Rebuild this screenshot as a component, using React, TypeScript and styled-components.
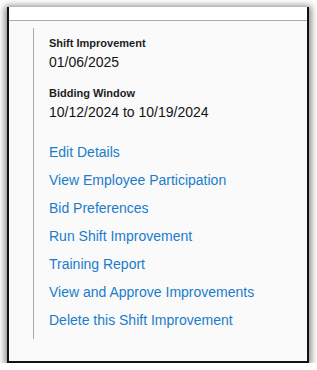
import React from 'react'
import styled, { createGlobalStyle } from 'styled-components'

const GlobalStyle = createGlobalStyle`
  html, body {
    margin: 0;
    padding: 0;
    background: #ffffff;
    font-family: "Liberation Sans", Arial, sans-serif;
  }
`

const Window = styled.div`
  box-sizing: border-box;
  margin: 7px 0 0 7px;
  width: 302px;
  height: 356px;
  border: 2px solid #111;
  border-top: none;
  background: #fafafa;
  box-shadow: 0 1px 7px 2px rgba(0, 0, 0, 0.5);
  display: flex;
  flex-direction: column;
`

const TopStrip = styled.div`
  height: 13px;
  background: #ffffff;
  border-bottom: 1px solid #a8acb0;
`

const Panel = styled.div`
  margin: 7px 0 0 24px;
  padding: 8px 0 10px 15px;
  border-left: 1px solid #a9a9a9;
  display: flex;
  flex-direction: column;
`

const Field = styled.div`
  display: flex;
  flex-direction: column;
  gap: 3px;
  margin-bottom: 15px;
`

const Label = styled.div`
  font-size: 11px;
  line-height: 14px;
  font-weight: 700;
  color: #1e1e1e;
`

const Value = styled.div`
  font-size: 14px;
  line-height: 18px;
  color: #141414;
`

const Links = styled.div`
  display: flex;
  flex-direction: column;
  gap: 10px;
  margin-top: 7px;
`

const ActionLink = styled.a`
  font-size: 14px;
  line-height: 18px;
  color: #1b7ccb;
  text-decoration: none;
  cursor: pointer;
`

const fields = [
  { label: 'Shift Improvement', value: '01/06/2025' },
  { label: 'Bidding Window', value: '10/12/2024 to 10/19/2024' },
]

const actions = [
  'Edit Details',
  'View Employee Participation',
  'Bid Preferences',
  'Run Shift Improvement',
  'Training Report',
  'View and Approve Improvements',
  'Delete this Shift Improvement',
]

const App: React.FC = () => {
  return (
    <>
      <GlobalStyle />
      <Window>
        <TopStrip />
        <Panel>
          {fields.map((f) => (
            <Field key={f.label}>
              <Label>{f.label}</Label>
              <Value>{f.value}</Value>
            </Field>
          ))}
          <Links>
            {actions.map((a) => (
              <ActionLink key={a}>{a}</ActionLink>
            ))}
          </Links>
        </Panel>
      </Window>
    </>
  )
}

export default App
